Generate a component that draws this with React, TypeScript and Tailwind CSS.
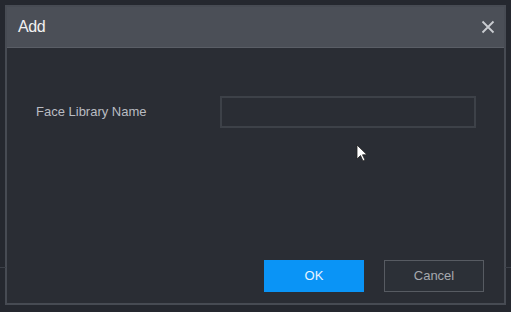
import React from "react";

export default function App() {
  return (
    <div className="relative w-[511px] h-[312px] bg-[#25282f] overflow-hidden" style={{ fontFamily: '"Liberation Sans", Arial, sans-serif' }}>
      <div className="absolute left-0 top-[267px] w-[6px] h-px bg-[#3c4048]" />
      <div className="absolute right-0 top-[267px] w-[6px] h-px bg-[#3c4048]" />
      <div className="ml-[5px] mt-[5px] w-[501px] h-[300px] border-2 border-[#474b53] bg-[#2a2d34] flex flex-col">
        <div className="h-[41px] bg-[#4b4f57] border-b border-[#5a5e66] flex items-center justify-between pl-[11px] pr-[9px]">
          <span className="text-[16px] text-[#f2f2f2] tracking-[-0.4px]">Add</span>
          <svg width="14" height="14" viewBox="0 0 14 14">
            <path d="M1.5 1.5 L12.5 12.5 M12.5 1.5 L1.5 12.5" stroke="#c9ccd1" strokeWidth="1.8" />
          </svg>
        </div>
        <div className="flex-1 flex flex-col">
          <div className="flex items-center mt-[48px] pl-[29px]">
            <span className="w-[184px] text-[13px] text-[#b9bcc2]">Face Library Name</span>
            <div className="w-[256px] h-[32px] border-2 border-[#3d4148] bg-[#2a2d34]" />
          </div>
          <div className="flex-1" />
          <div className="flex justify-end gap-[20px] pr-[20px] pb-[11px]">
            <button className="w-[100px] h-[32px] bg-[#0a94f6] text-[13px] text-[#e8f4ff]">OK</button>
            <button className="w-[100px] h-[32px] border border-[#575b62] bg-[#2c3037] text-[13px] text-[#a6a9ae]">Cancel</button>
          </div>
        </div>
      </div>
      <svg className="absolute left-[356px] top-[144px]" width="13" height="19" viewBox="0 0 13 19">
        <path d="M1 1 L1 15 L4.5 11.5 L7 17 L9 16 L6.5 10.8 L11 10.8 Z" fill="#ffffff" stroke="#222" strokeWidth="0.8" />
      </svg>
    </div>
  );
}
